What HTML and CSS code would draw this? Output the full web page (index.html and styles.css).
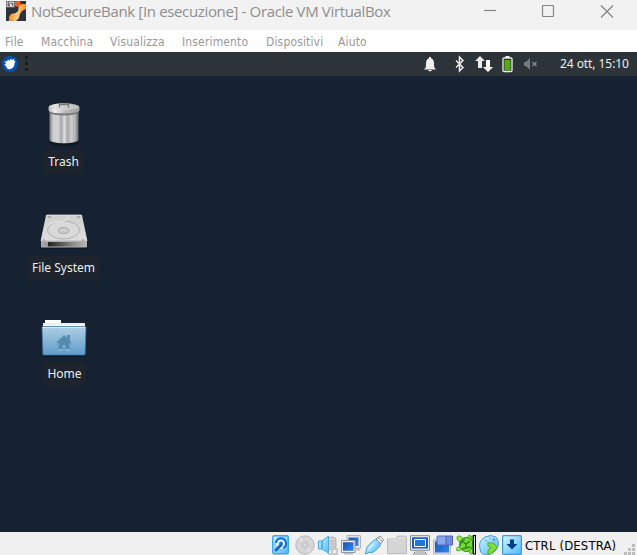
FILE: index.html
```html
<!DOCTYPE html>
<html lang="it">
<head>
<meta charset="utf-8">
<title>NotSecureBank</title>
<link rel="stylesheet" href="styles.css">
</head>
<body>
<svg class="defs" width="0" height="0" aria-hidden="true">
  <defs>
    <linearGradient id="metal"><stop offset="0" stop-color="#77787a"/><stop offset=".12" stop-color="#c9c9cc"/><stop offset=".3" stop-color="#d0d0d3"/><stop offset=".42" stop-color="#a9a9ac"/><stop offset=".5" stop-color="#dedee0"/><stop offset=".62" stop-color="#a9a9ac"/><stop offset=".78" stop-color="#cacacd"/><stop offset="1" stop-color="#77787a"/></linearGradient>
    <linearGradient id="lid"><stop offset="0" stop-color="#b4b4b6"/><stop offset=".2" stop-color="#f2f2f3"/><stop offset=".55" stop-color="#b9b9bc"/><stop offset="1" stop-color="#a0a0a3"/></linearGradient>
    <linearGradient id="disk" x2="0" y2="1"><stop offset="0" stop-color="#cfcfcf"/><stop offset="1" stop-color="#dedede"/></linearGradient>
    <linearGradient id="front"><stop offset="0" stop-color="#a9a9a9"/><stop offset=".13" stop-color="#999"/><stop offset=".14" stop-color="#202020"/><stop offset=".7" stop-color="#8b8b8b"/><stop offset="1" stop-color="#b5b5b5"/></linearGradient>
    <linearGradient id="folder" x2="0" y2="1"><stop offset="0" stop-color="#afcfe5"/><stop offset="1" stop-color="#5e9cca"/></linearGradient>
    <linearGradient id="sky" x2="1" y2="1"><stop offset="0" stop-color="#d2f5ff"/><stop offset="1" stop-color="#4eb8ff"/></linearGradient>
    <linearGradient id="navy" x2="1" y2="1"><stop offset="0" stop-color="#1257bd"/><stop offset="1" stop-color="#3187ee"/></linearGradient>
    <linearGradient id="orange" x2="1" y2="0"><stop offset="0" stop-color="#f68419"/><stop offset=".45" stop-color="#ffd08b"/><stop offset="1" stop-color="#fb8423"/></linearGradient>
  </defs>
</svg>
<div class="window">
  <header class="titlebar">
    <svg class="app-icon" width="20" height="20" viewBox="0 0 20 20"><rect width="20" height="20" fill="#2d333a"/><path d="M9 0h5l1 4-3 2-3-1z" fill="#ed5c20"/><path d="M3 20v-4l2-3 5-1 2-2 1-5 3-2h4v5l-4 2-2 3-1 4-3 3z" fill="url(#orange)"/><path d="M0 0h9v7H0z" fill="#555"/><path d="M.7.700h7.500v5H.7z" fill="#f1f1f1"/><path d="M3.500 1.700H2v3h1.500V3H2M5 1.500V3h1.800M6.800 1.500v3.500" fill="none" stroke="#333" stroke-width=".8"/></svg>
    <h1>NotSecureBank [In esecuzione] - Oracle VM VirtualBox</h1>
    <svg class="controls" width="130" height="13" viewBox="0 0 130 13" fill="none" stroke="#858585" stroke-width="1.200"><path d="M0 5.500h12"/><rect x="58.500" y=".5" width="11" height="11" rx="1"/><path d="M117 .500l12 12M129 .500l-12 12"/></svg>
  </header>
  <nav class="menubar"><span>File</span><span>Macchina</span><span>Visualizza</span><span>Inserimento</span><span>Dispositivi</span><span>Aiuto</span></nav>
  <div class="panel">
    <svg width="30" height="24" viewBox="0 0 30 24"><circle cx="10" cy="12" r="8" fill="#0750af"/><path d="M4.500 9l2.500.5L8 7.500l1.500 1.200L11 6.500l.8 1.700L14.500 6.500l-.8 2.300 1.800.2-1 2.500c0 3-1.500 4.500-4 5.500-2 .7-3.500 0-4-2l-2-2.500 1.500-1z" fill="#fff"/><path d="M25 4h3v3h-3zM25 10h3v3h-3zM25 16h3v3h-3z" fill="#191d20"/></svg>
    <svg class="tray" width="116" height="24" viewBox="0 0 116 24"><path d="M1 17.500c2-2 2-3 2-6 0-3 1-4.500 3-5.200V5h2v1.300c2 .7 3 2.200 3 5.200 0 3 0 4 2 6zM5 18h4l-1 1.200H6z" fill="#eeeeec"/><path d="M33 8.500l7 7-3.500 3.500V5l3.500 3.500-7 7" fill="none" stroke="#eeeeec" stroke-width="1.500"/><path d="M57 4l5 5h-3v7h-4V9h-3z" fill="#eeeeec"/><path d="M65 20l5-5h-3V8h-4v7h-3z" fill="#fff"/><rect x="80" y="6" width="9" height="13.500" rx="1" fill="#293035" stroke="#eeeeec" stroke-width="1.300"/><path d="M82.500 4h4v2h-4z" fill="#eeeeec"/><path d="M81.500 8h6v10.500h-6z" fill="#55a914"/><path d="M101 10h2l4-4v12l-4-4h-2z" fill="#777c7f"/><path d="M109.500 10l4 4m0-4l-4 4" stroke="#8b9092" stroke-width="1.300"/></svg>
    <time>24 ott, 15:10</time>
  </div>
  <main class="desktop">
    <div class="launcher">
      <svg width="48" height="48" viewBox="0 0 48 48"><ellipse cx="24" cy="42" rx="15" ry="3" fill="#101820"/><path d="M9.500 9h29v29.500c0 5-29 5-29 0z" fill="url(#metal)"/><path d="M14 12v28M17 13v28M25 13v28M31 13v28M35 12v28" stroke="#e4e4e6" stroke-width="1" opacity=".5"/><path d="M9.500 9v3.500q14 4 29 0V9z" fill="#77777a"/><path d="M8.500 6c2-5 29-5 31 0v3.500q-2 3-15.500 3T8.500 9.500z" fill="url(#lid)"/><ellipse cx="24" cy="6" rx="14.500" ry="3" fill="#d5d5d6" opacity=".6"/><path d="M19.500 6.500V3.500h9v3" fill="none" stroke="#777" stroke-width="1.300"/></svg>
      <span>Trash</span>
    </div>
    <div class="launcher">
      <svg width="48" height="48" viewBox="0 0 48 48"><path d="M1 40h46v2H1z" fill="#101820"/><path d="M6.500 8h35L47 34H1z" fill="url(#disk)" stroke="#eee" stroke-width=".7"/><path d="M1 33.500h46v6q0 1-1 1H2q-1 0-1-1z" fill="#b0b0b0"/><path d="M2 35h44v4.500H2z" fill="url(#front)"/><ellipse cx="23.500" cy="23" rx="16" ry="9" fill="#d9d9d9" stroke="#b2b2b2"/><path d="M8 19c5-6 14-3 18-6 2-2 1-3 3-4" fill="none" stroke="#ededed" stroke-width="1"/><ellipse cx="23.500" cy="23.500" rx="5.500" ry="3" fill="#ccc" stroke="#999" stroke-width=".8"/><path d="M8 10h3M37 10h3M3 33h2M42 33h2" stroke="#888"/></svg>
      <span>File System</span>
    </div>
    <div class="launcher home-item">
      <svg width="48" height="48" viewBox="0 0 48 48"><path d="M2 42h44v2H2z" fill="#101820"/><path d="M5 7h16v3h24v6H3v-6h2z" fill="#fff"/><path d="M3 11h42" stroke="#ddd"/><path d="M2 14.500q0-1 1-1h42q1 0 1 1L45 42H3z" fill="url(#folder)" stroke="#427aa3" stroke-width=".8"/><path d="M3 14.500h42" stroke="#d5e9f5"/><path d="M16 30l8-8 3 3v-3h3v6l2 2h-2.500v6.500h-4V32h-3v4.500h-4V30z" fill="#568bb0"/><path d="M18.500 37h4m3 0h4" stroke="#a9cce4"/></svg>
      <span>Home</span>
    </div>
  </main>
  <footer class="statusbar">
    <div class="devices">
      <svg viewBox="0 0 20 20"><rect x=".7" y=".7" width="15.600" height="18" rx="1.500" fill="url(#sky)" stroke="#3aa5f2" stroke-width="1.400"/><circle cx="9" cy="8.500" r="6" fill="#edfcff" stroke="#65b4ed" stroke-width="1"/><path d="M4 8a5 5 0 1 1 7 5" fill="none" stroke="#126ddd" stroke-width="2"/><circle cx="9" cy="8.500" r="2" fill="#1f74dd"/><path d="M9 10l-5 5" stroke="#1764cd" stroke-width="3" stroke-linecap="round"/></svg>
      <svg viewBox="0 0 20 20"><circle cx="10" cy="10" r="9.200" fill="#d5d5d5" stroke="#b9b9b9"/><path d="M10 10L3 4l4-2zm0 0l7 6-4 2z" fill="#e0e0e0"/><circle cx="10" cy="10" r="3" fill="#ddd" stroke="#bbb"/><circle cx="10" cy="10" r="1.300" fill="#fff" stroke="#aaa" stroke-width=".6"/></svg>
      <svg viewBox="0 0 20 20"><rect x="10" y="2" width="8" height="13" rx="3" fill="#cfcfcf" stroke="#b5b5b5"/><path d="M12 6h6m-6 3h6m-6 3h6" stroke="#b8b8b8"/><path d="M10 19h9v-6M14 15v4" fill="none" stroke="#c0c0c0" stroke-width="1.500"/><path d="M.5 6h3.500v8H.5zM4 6l6.500-5v17L4 14z" fill="url(#sky)" stroke="#48a8dc"/></svg>
      <svg viewBox="0 0 20 20"><path d="M6 .7h13.400v12.600H6z" fill="#eee" stroke="#aaa"/><path d="M7.500 2.500h10v8.500h-10z" fill="url(#navy)"/><path d="M.5 5.500h13.500v12H.5z" fill="#eee" stroke="#999"/><path d="M2 7.200h10.500v8.600H2z" fill="url(#navy)"/><path d="M3 18.800h9M15 15h4" stroke="#aaa"/></svg>
      <svg viewBox="0 0 20 20"><path d="M12 4l4-3 3.500 4-3 4z" fill="#f4f4f4" stroke="#888"/><path d="M14.500 3l1 1M16.500 5l1 1" stroke="#444"/><path d="M8 7q3-4 6-1 4 4 1 6l-4 4q-3 2.500-6 1.500l-3.500 1.500.8-4q-.5-3 5.700-8z" fill="url(#sky)" stroke="#4ba0d4"/><path d="M4 15l6-6" stroke="#c4f0ff" stroke-width="2"/></svg>
      <svg viewBox="0 0 20 20"><path d="M.5 4h9l1-3h8l1 2v15.500H.5z" fill="#d5d5d5" stroke="#bbb"/><path d="M1 5h9l2-2h7" fill="none" stroke="#e5e5e5"/></svg>
      <svg viewBox="0 0 20 20"><path d="M.5.700h19v14.500H.5z" fill="#eee" stroke="#888"/><path d="M2 2.300h16v11.200H2z" fill="#1760c0"/><path d="M4.500 4.500h11v7h-11z" fill="#2376d8" stroke="#fff"/><path d="M5 17h10l2 2H3z" fill="#eee" stroke="#888" stroke-width=".9"/></svg>
      <svg viewBox="0 0 20 20"><path d="M.5 5h17v14H.5z" fill="#ddd" stroke="#bbb"/><path d="M2 6.500h14v11H2z" fill="url(#navy)"/><path d="M4 2q0-1 1-1h9v9H5q-1 0-1-1z" fill="#87a7ef" stroke="#5968c1"/><path d="M13 2l1-1h5.500v9H14l-1-1z" fill="#718ce3" stroke="#5363b0"/></svg>
      <svg viewBox="0 0 20 20"><g fill="#8ae84b" stroke="#3c9d20" stroke-width=".8"><path d="M8 4Q3-1 1 2q-1 4 6 6zM14 4q1-4 3-2 2 3-1 7zM5 11q-6 1-4 5 3 0 7-3zM12 15q2 5 4 4 2-2 0-7z"/><path d="M11 3l2-3 2 1 0 4z"/></g><path d="M4 7q3-6 9-4 6 3 3 9-2 6-8 4-6-3-4-9z" fill="#76da35" stroke="#2d8c19"/><path d="M6 6l4 3 4-3M10 9v4l-4 1m4-1l4-1M4 10l2-4 3-2" fill="none" stroke="#29881b" stroke-width="1.400"/><path d="M17.300.700h2.200v18.300h-2.200z" fill="#fff" stroke="#000" stroke-width="1.200"/></svg>
      <svg viewBox="0 0 20 20"><path d="M1 14Q-1 6 6 2q6-3 11 0 5 6 0 13-5 6-13 4-3-1-3-5z" fill="url(#sky)" stroke="#4b9ed2"/><path d="M10 2q2 4 8 6M5 5q4 0 5 4" fill="none" stroke="#75b9e2"/><circle cx="15" cy="4.500" r=".8" fill="#275477"/><path d="M9 8h5l5 4-7 7H9v-4l3-2-3-2z" fill="#82dc37" stroke="#4eb42c"/></svg>
      <svg viewBox="0 0 20 20"><rect x=".6" y=".6" width="18.800" height="18.800" rx="1" fill="url(#sky)" stroke="#3d9bd5" stroke-width="1.200"/><path d="M8 4.500h4V9h3.500L10 14.500 4.500 9H8z" fill="#003d86"/></svg>
    </div>
    <span class="host-key">CTRL (DESTRA)</span>
    <svg class="grip" width="13" height="12" viewBox="0 0 13 12"><path d="M8 0h3v3H8zM4 4h3v3H4zM8 4h3v3H8zM0 8h3v3H0zM4 8h3v3H4zM8 8h3v3H8z" fill="#bdbdbd"/></svg>
  </footer>
</div>
</body>
</html>
```
FILE: styles.css
```css
* { box-sizing: border-box; }
body { margin: 0; overflow: hidden; }
svg { display: block; flex: none; }
.defs { position: absolute; }
.window { width: 637px; height: 555px; display: grid; grid-template-rows: 30px 22px 24px 456px 23px; overflow: hidden; }
.titlebar { display: flex; align-items: flex-start; background: #f2f2f2; padding: 1px 23px 0 6px; }
.titlebar h1 { margin: -1px 0 0 5px; font: 400 15px/22px "Open Sans", "Noto Sans", sans-serif; letter-spacing: -.35px; color: #8e8e8e; white-space: nowrap; }
.controls { margin: 4px 0 0 auto; }
.menubar { display: grid; grid-template-columns: 36px 69px 72px 84px 72px 50px; padding-left: 5px; background: #fff; color: #999; font: 12px/24px "DejaVu Sans Condensed", "DejaVu Sans", sans-serif; letter-spacing: .15px; white-space: nowrap; }
.panel { display: flex; background: #2c343a; color: #eeeeec; border-bottom: 1px solid #2c3235; }
.tray { margin-left: 393px; }
.panel time { margin-left: 21px; font: 12px/23px "Noto Sans", sans-serif; letter-spacing: -.07px; white-space: nowrap; }
.desktop { background: #162232; padding: 21px 0 0 10px; }
.launcher { width: 108px; height: 106px; display: flex; flex-direction: column; align-items: center; }
.launcher svg { margin-top: 4px; }
.launcher span { margin-top: 1px; height: 24px; padding: 0 4px; border-radius: 4px; background: #1d242d; color: #eee; font: 12px/24px "Noto Sans", sans-serif; white-space: nowrap; }
.launcher:not(.home-item) span { margin-left: -1px; }
.home-item span { margin-left: 1px; }
.statusbar { display: flex; align-items: flex-start; background: #f0f0f0; padding: 3px 0 0 272px; }
.devices { display: flex; gap: 3px; }
.devices svg { width: 20px; height: 20px; }
.host-key { margin-left: 3px; width: 96px; font: 13px/21px "DejaVu Sans Condensed", "DejaVu Sans", sans-serif; letter-spacing: .15px; color: #000; white-space: nowrap; }
.grip { margin-top: 9px; margin-left: 3px; }
```
